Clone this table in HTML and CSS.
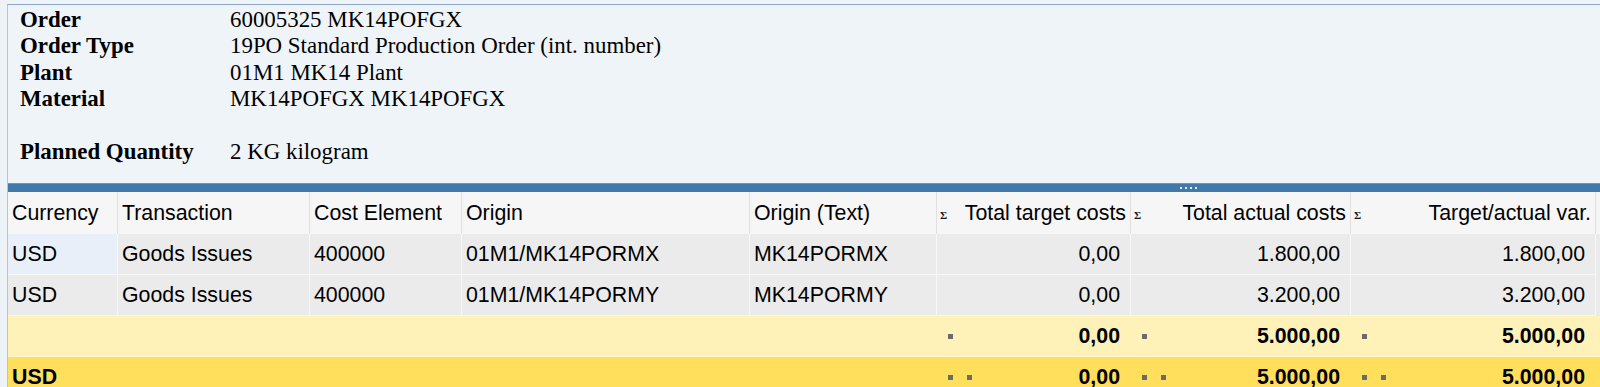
FILE: index.html
```html
<!DOCTYPE html>
<html lang="en">
<head>
<meta charset="utf-8">
<title>Order cost analysis</title>
<link rel="stylesheet" href="styles.css">
</head>
<body>
<div class="frame">
  <section class="info">
    <div class="info-grid">
      <div class="lbl">Order</div><div class="val">60005325 MK14POFGX</div>
      <div class="lbl">Order Type</div><div class="val">19PO Standard Production Order (int. number)</div>
      <div class="lbl">Plant</div><div class="val">01M1 MK14 Plant</div>
      <div class="lbl">Material</div><div class="val">MK14POFGX MK14POFGX</div>
      <div class="gap"></div>
      <div class="lbl">Planned Quantity</div><div class="val">2 KG kilogram</div>
    </div>
  </section>
  <div class="splitter"><span class="grip"><i></i><i></i><i></i><i></i></span></div>
  <div class="table">
    <div class="row head">
      <div class="c">Currency</div>
      <div class="c">Transaction</div>
      <div class="c">Cost Element</div>
      <div class="c">Origin</div>
      <div class="c">Origin (Text)</div>
      <div class="c hn"><span class="sigma">&Sigma;</span><span class="hl">Total target costs</span></div>
      <div class="c hn"><span class="sigma">&Sigma;</span><span class="hl">Total actual costs</span></div>
      <div class="c hn"><span class="sigma">&Sigma;</span><span class="hl">Target/actual var.</span></div>
    </div>
    <div class="row data">
      <div class="c sel">USD</div>
      <div class="c">Goods Issues</div>
      <div class="c">400000</div>
      <div class="c">01M1/MK14PORMX</div>
      <div class="c">MK14PORMX</div>
      <div class="c num">0,00</div>
      <div class="c num">1.800,00</div>
      <div class="c num">1.800,00</div>
    </div>
    <div class="row data">
      <div class="c">USD</div>
      <div class="c">Goods Issues</div>
      <div class="c">400000</div>
      <div class="c">01M1/MK14PORMY</div>
      <div class="c">MK14PORMY</div>
      <div class="c num">0,00</div>
      <div class="c num">3.200,00</div>
      <div class="c num">3.200,00</div>
    </div>
    <div class="row sum sub">
      <div class="c"></div>
      <div class="c"></div>
      <div class="c"></div>
      <div class="c"></div>
      <div class="c"></div>
      <div class="c snum"><span class="marks"><b></b></span><span class="v">0,00</span></div>
      <div class="c snum"><span class="marks"><b></b></span><span class="v">5.000,00</span></div>
      <div class="c snum"><span class="marks"><b></b></span><span class="v">5.000,00</span></div>
    </div>
    <div class="row sum tot">
      <div class="c">USD</div>
      <div class="c"></div>
      <div class="c"></div>
      <div class="c"></div>
      <div class="c"></div>
      <div class="c snum"><span class="marks"><b></b><b></b></span><span class="v">0,00</span></div>
      <div class="c snum"><span class="marks"><b></b><b></b></span><span class="v">5.000,00</span></div>
      <div class="c snum"><span class="marks"><b></b><b></b></span><span class="v">5.000,00</span></div>
    </div>
  </div>
</div>
</body>
</html>
```

FILE: styles.css
```css
html, body {
  margin: 0;
  padding: 0;
}
body {
  background: #eef3f8;
  overflow: hidden;
}
.frame {
  margin: 4px 0 0 7px;
  border-left: 1px solid #b4c6da;
  border-top: 1px solid #8ba7c6;
}
.info {
  background: #eff4f9;
  padding: 2px 0 18px 12px;
  font-family: "Liberation Serif", "Times New Roman", serif;
  font-size: 22.9px;
  line-height: 26.4px;
  color: #000;
}
.info-grid {
  display: grid;
  grid-template-columns: 210px auto;
}
.lbl {
  font-weight: bold;
}
.gap {
  grid-column: 1 / -1;
  height: 26.4px;
}
.splitter {
  height: 8px;
  background: #4279ab;
  border-top: 1px solid #6f94bb;
  display: flex;
  align-items: center;
}
.grip {
  margin-left: 1172px;
  display: flex;
  gap: 3px;
}
.grip i {
  display: block;
  width: 2px;
  height: 2px;
  background: #e4edf6;
}
.table {
  font-family: "Liberation Sans", Arial, sans-serif;
  font-size: 21.33px;
  color: #000;
}
.row {
  display: grid;
  grid-template-columns: 110px 192px 152px 288px 187px 194px 220px 245px;
}
.c {
  display: flex;
  align-items: center;
  padding: 0 4px;
  white-space: nowrap;
  overflow: hidden;
  box-sizing: border-box;
}
.head {
  height: 42px;
  background: #f6f6f6;
}
.head .c {
  border-right: 1px solid #e0e0e0;
}
.hn {
  padding-left: 3px;
}
.sigma {
  font-family: "Liberation Serif", serif;
  font-weight: bold;
  font-size: 11px;
  line-height: 11px;
  margin-top: 5px;
  color: #1a1a1a;
}
.hl {
  margin-left: auto;
}
.data {
  height: 41px;
  background: #ebebeb;
}
.data .c {
  border-right: 1px solid #f7f7f7;
  border-bottom: 1px solid #f7f7f7;
}
.data .sel {
  background: #e8eff8;
}
.num {
  justify-content: flex-end;
  padding-right: 10px;
}
.sum {
  font-weight: bold;
}
.sub {
  height: 40px;
  background: #fff2b9;
  border-bottom: 1px solid #fff7d6;
}
.tot {
  height: 41px;
  background: #ffdf5c;
}
.snum {
  padding: 0 11px 0 11px;
}
.marks {
  display: flex;
  gap: 14px;
}
.marks b {
  display: block;
  width: 5px;
  height: 5px;
  background: #6b6b6b;
}
.v {
  margin-left: auto;
}
```
